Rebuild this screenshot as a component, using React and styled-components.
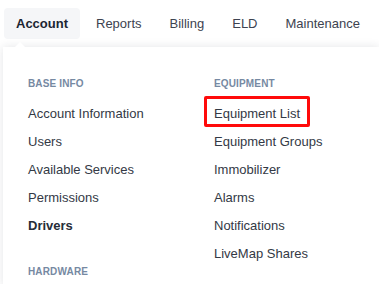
import React from "react";
import styled, { createGlobalStyle } from "styled-components";

const Global = createGlobalStyle`
  html, body { margin: 0; padding: 0; background: #ffffff; }
  body { font-family: "Liberation Sans", Arial, sans-serif; overflow: hidden; }
`;

const Page = styled.div`
  width: 379px;
  height: 284px;
  overflow: hidden;
  background: #ffffff;
`;

const Nav = styled.nav`
  display: flex;
  gap: 4px;
  padding: 8px 0 0 4px;
`;

const Tab = styled.div`
  height: 31px;
  line-height: 31px;
  padding: 0 12px;
  border-radius: 4px;
  font-size: 13px;
  white-space: nowrap;
  color: ${(p) => (p.$active ? "#1c2531" : "#3d4350")};
  font-weight: ${(p) => (p.$active ? 700 : 400)};
  background: ${(p) => (p.$active ? "#f5f6f8" : "transparent")};
`;

const Panel = styled.div`
  position: relative;
  margin: 8px 0 0 3px;
  height: 240px;
  background: #ffffff;
  box-shadow: 0 0 9px rgba(30, 40, 60, 0.12);
  display: grid;
  grid-template-columns: 186px 1fr;
  padding: 31px 0 0 25px;
  box-sizing: border-box;
`;

const Arrow = styled.div`
  position: absolute;
  top: -5px;
  left: 12px;
  width: 0;
  height: 0;
  border-left: 5px solid transparent;
  border-right: 5px solid transparent;
  border-bottom: 5px solid #ffffff;
`;

const Column = styled.div`
  display: flex;
  flex-direction: column;
`;

const Group = styled.div`
  display: flex;
  flex-direction: column;
  margin-bottom: 26px;
`;

const Header = styled.div`
  font-size: 10px;
  line-height: 12px;
  font-weight: 700;
  letter-spacing: 0.15px;
  color: #7689a2;
  margin-bottom: 10px;
`;

const Item = styled.div`
  position: relative;
  font-size: 13px;
  line-height: 28px;
  white-space: nowrap;
  color: ${(p) => (p.$bold ? "#262d38" : "#333945")};
  font-weight: ${(p) => (p.$bold ? 700 : 400)};
`;

const Highlight = styled.span`
  position: absolute;
  top: -4px;
  left: -10px;
  width: 106px;
  height: 31px;
  box-sizing: border-box;
  border: 3px solid #ff0a0a;
  border-radius: 2px;
`;

export default function App() {
  return (
    <Page>
      <Global />
      <Nav>
        <Tab $active>Account</Tab>
        <Tab>Reports</Tab>
        <Tab>Billing</Tab>
        <Tab>ELD</Tab>
        <Tab>Maintenance</Tab>
      </Nav>
      <Panel>
        <Arrow />
        <Column>
          <Group>
            <Header>BASE INFO</Header>
            <Item>Account Information</Item>
            <Item>Users</Item>
            <Item>Available Services</Item>
            <Item>Permissions</Item>
            <Item $bold>Drivers</Item>
          </Group>
          <Header>HARDWARE</Header>
        </Column>
        <Column>
          <Group>
            <Header>EQUIPMENT</Header>
            <Item>
              Equipment List
              <Highlight />
            </Item>
            <Item>Equipment Groups</Item>
            <Item>Immobilizer</Item>
            <Item>Alarms</Item>
            <Item>Notifications</Item>
            <Item>LiveMap Shares</Item>
          </Group>
        </Column>
      </Panel>
    </Page>
  );
}
